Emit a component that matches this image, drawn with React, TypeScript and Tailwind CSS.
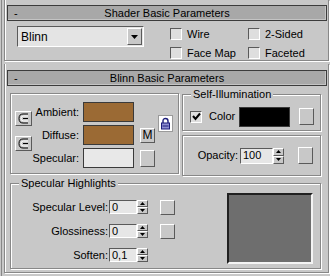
import React from 'react';

// 3ds Max style material editor rollouts
const raised = 'border border-t-white border-l-white border-r-[#5a5a5a] border-b-[#5a5a5a]';
const sunken = 'border border-t-[#5a5a5a] border-l-[#5a5a5a] border-r-white border-b-white';
const etched = 'border border-[#888888] shadow-[1px_1px_0_#ffffff,inset_1px_1px_0_#ffffff]';
const rolloutFrame =
  'border-x border-b border-[#888888] shadow-[1px_1px_0_#ffffff,inset_1px_0_0_#ffffff]';

const brown = 'bg-[#9b6a34]';

function Header({ title }: { title: string }) {
  return (
    <div className="ml-[2px] mr-[1px] h-[16px] bg-[#a8a8a8] border border-[#3c3c3c] shadow-[inset_-1px_-1px_0_#c4c4c4] grid grid-cols-[24px_1fr_24px] items-center">
      <span className="pl-[6px]">-</span>
      <span className="text-center">{title}</span>
      <span />
    </div>
  );
}

function Checkbox({ checked = false }: { checked?: boolean }) {
  return (
    <div className={`w-[12px] h-[12px] bg-[#dedede] ${sunken} flex items-center justify-center`}>
      {checked && (
        <svg width="9" height="9" viewBox="0 0 9 9">
          <path d="M1 4 L3.5 7 L8 1.5" stroke="#000" strokeWidth="2" fill="none" />
        </svg>
      )}
    </div>
  );
}

function CheckItem({ label }: { label: string }) {
  return (
    <div className="flex items-center h-[14px]">
      <Checkbox />
      <span className="ml-[5px]">{label}</span>
    </div>
  );
}

function SmallButton({ h = 'h-[17px]', children }: { h?: string; children?: React.ReactNode }) {
  return (
    <div className={`w-[15px] ${h} bg-[#c8c8c8] ${raised} flex items-center justify-center`}>
      {children}
    </div>
  );
}

function Spinner({ value, w }: { value: string; w: string }) {
  return (
    <div className="flex h-full">
      <div className={`${w} h-full bg-[#e6e6e6] ${sunken} flex items-center pl-[2px]`}>{value}</div>
      <div className="w-[11px] h-full flex flex-col">
        <div className={`flex-1 ${raised} bg-[#c8c8c8] flex items-center justify-center`}>
          <svg width="5" height="3" viewBox="0 0 5 3">
            <path d="M0 3 L2.5 0 L5 3 Z" fill="#000" />
          </svg>
        </div>
        <div className={`flex-1 ${raised} bg-[#c8c8c8] flex items-center justify-center`}>
          <svg width="5" height="3" viewBox="0 0 5 3">
            <path d="M0 0 L2.5 3 L5 0 Z" fill="#000" />
          </svg>
        </div>
      </div>
    </div>
  );
}

function BracketButton() {
  return (
    <div className={`w-[17px] h-[15px] bg-[#c8c8c8] ${raised} flex items-center justify-center`}>
      <svg width="11" height="11" viewBox="0 0 11 11">
        <path d="M10 1 H5 Q1 1 1 5.5 Q1 10 5 10 H10" stroke="#000" fill="none" />
        <path d="M10 3 H5.5 Q3 3 3 5.5 Q3 8 5.5 8 H10" stroke="#fff" fill="none" />
        <path d="M10 5.5 H5" stroke="#000" fill="none" />
      </svg>
    </div>
  );
}

function Padlock() {
  return (
    <div className="w-[15px] h-[17px] bg-white border border-[#9a9a9a] flex items-center justify-center">
      <svg width="11" height="13" viewBox="0 0 11 13">
        <path d="M3 6 V4 Q3 1.5 5.5 1.5 Q8 1.5 8 4 V6" stroke="#1c1c7a" strokeWidth="1.4" fill="none" />
        <rect x="1.5" y="6" width="8" height="6" fill="#8c8cd0" stroke="#1c1c7a" />
        <path d="M2.5 9 H8.5" stroke="#1c1c7a" />
      </svg>
    </div>
  );
}

function ColorRow({ label, extra }: { label: string; extra?: React.ReactNode }) {
  return (
    <div className="flex items-center h-[20px]">
      <span className="w-[51px] text-right pr-[4px]">{label}</span>
      <div className={`w-[51px] h-[20px] border border-[#3a3a3a] ${label === 'Specular:' ? 'bg-[#e8e8e8]' : brown}`} />
      {extra && <div className="ml-[6px]">{extra}</div>}
    </div>
  );
}

function SpecRow({ label, button }: { label: string; button?: boolean }) {
  const value = label === 'Soften:' ? '0,1' : '0';
  return (
    <div className="flex items-center h-[14px]">
      <span className="w-[98px] text-right pr-[1px]">{label}</span>
      <Spinner value={value} w="w-[28px]" />
      {button && (
        <div className="ml-[12px]">
          <SmallButton h="h-[15px]" />
        </div>
      )}
    </div>
  );
}

export default function App() {
  return (
    <div className="w-[330px] h-[276px] bg-[#c8c8c8] overflow-hidden pl-[1px] text-[11px] leading-none text-black font-['Liberation_Sans',Arial,sans-serif]">
      <div className="h-full border-l border-[#888888] pl-[2px] pr-[1px]">
        {/* Shader Basic Parameters */}
        <div className={`h-[61px] pt-[5px] ${rolloutFrame}`}>
          <Header title="Shader Basic Parameters" />
          <div className="flex items-start mt-[5px]">
            <div className={`ml-[12px] w-[127px] h-[21px] bg-[#e4e4e4] ${sunken} flex items-center justify-between`}>
              <span className="pl-[3px] text-[12px]">Blinn</span>
              <div className={`w-[15px] h-[17px] mr-[1px] bg-[#c8c8c8] ${raised} flex items-center justify-center`}>
                <svg width="7" height="4" viewBox="0 0 7 4">
                  <path d="M0 0 L3.5 4 L7 0 Z" fill="#000" />
                </svg>
              </div>
            </div>
            <div className="ml-[26px] mt-[1px] grid grid-cols-[78px_auto] gap-y-[5px]">
              <CheckItem label="Wire" />
              <CheckItem label="2-Sided" />
              <CheckItem label="Face Map" />
              <CheckItem label="Faceted" />
            </div>
          </div>
        </div>

        {/* Blinn Basic Parameters */}
        <div className={`mt-[3px] h-[209px] pt-[6px] ${rolloutFrame}`}>
          <Header title="Blinn Basic Parameters" />
          <div className="flex items-start mt-[7px] ml-[5px] gap-[3px]">
            <div className={`w-[169px] h-[81px] ${etched} flex`}>
              <div className="ml-[4px] pt-[17px] flex flex-col gap-[10px]">
                <BracketButton />
                <BracketButton />
              </div>
              <div className="pt-[8px] flex flex-col gap-[3px]">
                <ColorRow label="Ambient:" />
                <ColorRow
                  label="Diffuse:"
                  extra={
                    <SmallButton h="h-[15px]">
                      <span className="text-[12px]">M</span>
                    </SmallButton>
                  }
                />
                <ColorRow label="Specular:" extra={<SmallButton />} />
              </div>
              <div className="ml-[3px] pt-[21px]">
                <Padlock />
              </div>
            </div>
            <div className="w-[139px] flex flex-col">
              <div className={`relative mt-[1px] h-[37px] ${etched} flex items-center pt-[14px] pb-[6px]`}>
                <span className="absolute -top-[6px] left-[8px] px-[2px] bg-[#c8c8c8]">Self-Illumination</span>
                <div className="ml-[7px]">
                  <Checkbox checked />
                </div>
                <span className="ml-[7px] w-[30px]">Color</span>
                <div className="w-[51px] h-[20px] bg-black border border-[#3a3a3a]" />
                <div className="ml-[9px]">
                  <SmallButton />
                </div>
              </div>
              <div className={`mt-[4px] h-[41px] ${etched} flex items-center`}>
                <span className="w-[55px] text-right">Opacity:</span>
                <div className="ml-[2px] h-[16px]">
                  <Spinner value="100" w="w-[33px]" />
                </div>
                <div className="ml-[14px]">
                  <SmallButton />
                </div>
              </div>
            </div>
          </div>

          <div className={`relative mt-[7px] ml-[5px] w-[311px] h-[86px] ${etched} flex items-start`}>
            <span className="absolute -top-[6px] left-[8px] px-[2px] bg-[#c8c8c8]">Specular Highlights</span>
            <div className="pt-[16px] flex flex-col gap-[10px]">
              <SpecRow label="Specular Level:" button />
              <SpecRow label="Glossiness:" button />
              <SpecRow label="Soften:" />
            </div>
            <div className="ml-[52px] mt-[9px] w-[86px] h-[71px] bg-[#6e6e6e] border-2 border-t-[#202020] border-l-[#202020] border-r-[#f4f4f4] border-b-[#f4f4f4]" />
          </div>
        </div>
      </div>
    </div>
  );
}
